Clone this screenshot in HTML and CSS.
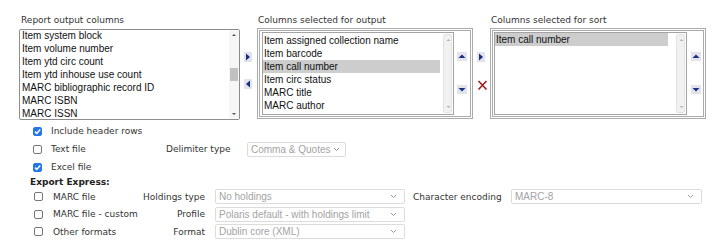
FILE: index.html
```html
<!DOCTYPE html>
<html>
<head>
<meta charset="utf-8">
<link rel="stylesheet" href="styles.css">
</head>
<body>
<div class="top">
  <div class="col col1">
    <div class="lbl">Report output columns</div>
    <div class="list list1">
      <div class="items">
        <div class="item">Item system block</div>
        <div class="item">Item volume number</div>
        <div class="item">Item ytd circ count</div>
        <div class="item">Item ytd inhouse use count</div>
        <div class="item">MARC bibliographic record ID</div>
        <div class="item">MARC ISBN</div>
        <div class="item">MARC ISSN</div>
      </div>
      <div class="sb sb-active">
        <svg class="sb-up" width="10" height="8" viewBox="0 0 10 8"><path d="M3 5 L5 3 L7 5 Z" fill="#505050"/></svg>
        <div class="sb-track"><div class="thumb"></div></div>
        <svg class="sb-dn" width="10" height="8" viewBox="0 0 10 8"><path d="M3 3 L5 5 L7 3 Z" fill="#505050"/></svg>
      </div>
    </div>
  </div>

  <div class="movers m1">
    <span class="abtn"><svg width="8" height="10" viewBox="0 0 8 10"><path d="M2 1.5 L6 5 L2 8.5 Z" fill="#1b2f80"/></svg></span>
    <span class="abtn"><svg width="8" height="10" viewBox="0 0 8 10"><path d="M6 1.5 L2 5 L6 8.5 Z" fill="#1b2f80"/></svg></span>
  </div>

  <div class="col col2">
    <div class="lbl">Columns selected for output</div>
    <div class="frame frame2">
      <div class="list list2">
        <div class="items">
          <div class="item">Item assigned collection name</div>
          <div class="item">Item barcode</div>
          <div class="item sel">Item call number</div>
          <div class="item">Item circ status</div>
          <div class="item">MARC title</div>
          <div class="item">MARC author</div>
        </div>
        <div class="sb sb-idle">
          <svg class="sb-up" width="9" height="8" viewBox="0 0 9 8"><path d="M2.5 5 L4.5 3 L6.5 5 Z" fill="#b5b5b5"/></svg>
          <div class="sb-track"></div>
          <svg class="sb-dn" width="9" height="8" viewBox="0 0 9 8"><path d="M2.5 3 L4.5 5 L6.5 3 Z" fill="#b5b5b5"/></svg>
        </div>
      </div>
      <div class="updown">
        <span class="ubtn"><svg width="10" height="9" viewBox="0 0 10 9"><path d="M1.5 6 L5 2.5 L8.5 6 Z" fill="#1b2f80"/></svg></span>
        <span class="ubtn"><svg width="10" height="9" viewBox="0 0 10 9"><path d="M1.5 3 L5 6.5 L8.5 3 Z" fill="#1b2f80"/></svg></span>
      </div>
    </div>
  </div>

  <div class="movers m2">
    <span class="abtn"><svg width="8" height="10" viewBox="0 0 8 10"><path d="M2 1.5 L6 5 L2 8.5 Z" fill="#1b2f80"/></svg></span>
    <span class="xbtn"><svg width="11" height="12" viewBox="0 0 11 12"><path d="M1.5 2 L9.5 10.5 M9.5 2 L1.5 10.5" stroke="#a51c1c" stroke-width="1.6"/></svg></span>
  </div>

  <div class="col col3">
    <div class="lbl">Columns selected for sort</div>
    <div class="frame frame3">
      <div class="list list3">
        <div class="items">
          <div class="item sel">Item call number</div>
        </div>
        <div class="sb sb-idle">
          <svg class="sb-up" width="9" height="8" viewBox="0 0 9 8"><path d="M2.5 5 L4.5 3 L6.5 5 Z" fill="#b5b5b5"/></svg>
          <div class="sb-track"></div>
          <svg class="sb-dn" width="9" height="8" viewBox="0 0 9 8"><path d="M2.5 3 L4.5 5 L6.5 3 Z" fill="#b5b5b5"/></svg>
        </div>
      </div>
      <div class="updown">
        <span class="ubtn"><svg width="10" height="9" viewBox="0 0 10 9"><path d="M1.5 6 L5 2.5 L8.5 6 Z" fill="#1b2f80"/></svg></span>
        <span class="ubtn"><svg width="10" height="9" viewBox="0 0 10 9"><path d="M1.5 3 L5 6.5 L8.5 3 Z" fill="#1b2f80"/></svg></span>
      </div>
    </div>
  </div>
</div>

<div class="opts">
  <div class="orow">
    <span class="cb on"><svg width="9" height="9" viewBox="0 0 9 9"><path d="M2 4.6 L3.8 6.4 L7.2 2.6" stroke="#fff" stroke-width="1.5" fill="none"/></svg></span>
    <span class="otext">Include header rows</span>
  </div>
  <div class="orow">
    <span class="cb"></span>
    <span class="otext w1">Text file</span>
    <span class="olabel dl">Delimiter type</span>
    <span class="dsel s-delim">Comma &amp; Quotes<svg class="chev" width="7" height="5" viewBox="0 0 7 5"><path d="M1 1 L3.5 3.5 L6 1" stroke="#888" stroke-width="1" fill="none"/></svg></span>
  </div>
  <div class="orow">
    <span class="cb on"><svg width="9" height="9" viewBox="0 0 9 9"><path d="M2 4.6 L3.8 6.4 L7.2 2.6" stroke="#fff" stroke-width="1.5" fill="none"/></svg></span>
    <span class="otext">Excel file</span>
  </div>
  <div class="ehead">Export Express:</div>
  <div class="erow">
    <span class="cb"></span>
    <span class="etext">MARC file</span>
    <span class="elabel">Holdings type</span>
    <span class="dsel s-wide">No holdings<svg class="chev push" width="7" height="5" viewBox="0 0 7 5"><path d="M1 1 L3.5 3.5 L6 1" stroke="#999" stroke-width="1" fill="none"/></svg></span>
    <span class="olabel enc">Character encoding</span>
    <span class="dsel s-enc">MARC-8<svg class="chev push" width="7" height="5" viewBox="0 0 7 5"><path d="M1 1 L3.5 3.5 L6 1" stroke="#999" stroke-width="1" fill="none"/></svg></span>
  </div>
  <div class="erow">
    <span class="cb"></span>
    <span class="etext">MARC file - custom</span>
    <span class="elabel">Profile</span>
    <span class="dsel s-wide">Polaris default - with holdings limit<svg class="chev push" width="7" height="5" viewBox="0 0 7 5"><path d="M1 1 L3.5 3.5 L6 1" stroke="#999" stroke-width="1" fill="none"/></svg></span>
  </div>
  <div class="erow">
    <span class="cb"></span>
    <span class="etext">Other formats</span>
    <span class="elabel">Format</span>
    <span class="dsel s-wide">Dublin core (XML)<svg class="chev push" width="7" height="5" viewBox="0 0 7 5"><path d="M1 1 L3.5 3.5 L6 1" stroke="#999" stroke-width="1" fill="none"/></svg></span>
  </div>
</div>
</body>
</html>
```

FILE: styles.css
```css
html, body {
  margin: 0;
  padding: 0;
  background: #ffffff;
}
body {
  width: 720px;
  height: 240px;
  overflow: hidden;
  font-family: "DejaVu Sans", Verdana, sans-serif;
  font-size: 9px;
  color: #333333;
}

/* ---------- top area ---------- */
.top {
  display: flex;
  align-items: flex-start;
  padding: 13px 0 0 19px;
  height: 107px;
}
.col { display: flex; flex-direction: column; }
.col1 { width: 221px; }
.col2, .col3 { width: 216px; }
.lbl {
  height: 15px;
  line-height: 14px;
  white-space: nowrap;
  color: #333;
}
.col1 .lbl { padding-left: 2px; }
.col2 .lbl, .col3 .lbl { padding-left: 1px; }

.list {
  display: flex;
  box-sizing: border-box;
  background: #fff;
  overflow: hidden;
  font-family: "Liberation Sans", Arial, sans-serif;
  font-size: 10px;
  color: #111;
}
.items {
  flex: 1;
  overflow: hidden;
  min-width: 0;
}
.item {
  height: 13px;
  line-height: 13px;
  white-space: nowrap;
  padding-left: 1px;
}
.item.sel { background: #cdcdcd; }

.list1 {
  margin-top: 1px;
  height: 91px;
  border: 1px solid #8d8d8d;
  border-radius: 2px;
}
.list1 .items { padding: 0 0 0 1px; margin-top: -1px; }

.sb {
  display: flex;
  flex-direction: column;
  box-sizing: border-box;
}
.sb svg { display: block; flex: none; }
.sb-track { flex: 1; position: relative; }
.sb-active {
  width: 10px;
  background: #f6f6f6;
  margin-right: 0;
  padding-top: 1px;
  padding-bottom: 1px;
}
.sb-active .sb-track { display: flex; flex-direction: column; padding-top: 29px; }
.thumb {
  width: 8px;
  height: 13px;
  margin-left: 1px;
  background: #c1c1c1;
}
.sb-idle {
  width: 9px;
  margin: 1px 1px 1px 0;
  background: #f1f1f1;
  border: 1px solid #e2e2e2;
  border-radius: 2px;
  padding-top: 1px;
  padding-bottom: 1px;
}

/* frames */
.frame {
  display: flex;
  align-items: flex-start;
  height: 91px;
  box-sizing: border-box;
  border: 3px double #ababab;
  padding-top: 1px;
}
.frame2 { padding-left: 2px; }
.frame3 { padding-left: 1px; }
.list2, .list3 {
  height: 83px;
  border: 1px solid #a3a3a3;
}
.list2 { width: 192px; }
.list3 { width: 193px; }
.list2 .items { padding: 1px 3px 0 0; }
.list3 .items { padding: 0 8px 0 0; }
.list2 .item { padding-left: 1px; }

.updown {
  display: flex;
  flex-direction: column;
  padding-top: 20px;
  gap: 24px;
}
.frame2 .updown { margin-left: 3px; }
.frame3 .updown { margin-left: 4px; }
.ubtn {
  display: block;
  width: 10px;
  height: 9px;
  background: #e3e3ec;
}
.ubtn svg, .abtn svg, .xbtn svg { display: block; }

.movers {
  display: flex;
  flex-direction: column;
  padding-top: 39px;
}
.m1 { margin-left: 4px; margin-right: 5px; width: 8px; gap: 17px; }
.m2 { margin-left: 4px; margin-right: 3px; width: 10px; gap: 17px; }
.abtn {
  display: block;
  width: 8px;
  height: 10px;
  background: #e3e3ec;
}
.xbtn { display: block; width: 11px; height: 12px; }

/* ---------- options ---------- */
.opts {
  padding-top: 2px;
}
.orow {
  display: flex;
  align-items: center;
  height: 18px;
  padding-left: 33px;
}
.cb {
  flex: none;
  display: block;
  width: 9px;
  height: 9px;
  box-sizing: border-box;
  border: 1px solid #777;
  border-radius: 2px;
  background: #fff;
}
.cb svg { display: block; margin: -1px; }
.cb.on {
  border-color: #2477e6;
  background: #2477e6;
}
.otext { margin-left: 9px; white-space: nowrap; }
.w1 { width: 115px; }
.olabel { white-space: nowrap; }
.dl { width: 81px; }

.dsel {
  display: flex;
  align-items: center;
  box-sizing: border-box;
  height: 15px;
  border: 1px solid #dcdcdc;
  border-radius: 2px;
  padding-left: 3px;
  font-family: "Liberation Sans", Arial, sans-serif;
  font-size: 10px;
  color: #a3a3a3;
  white-space: nowrap;
  overflow: hidden;
}
.chev { flex: none; margin-left: 3px; }
.chev.push { margin-left: auto; margin-right: 7px; }
.s-delim { width: 99px; }
.s-wide { width: 190px; }
.s-enc { width: 191px; }

.ehead {
  font-weight: bold;
  height: 12px;
  line-height: 12px;
  padding-left: 30px;
  color: #222;
}
.erow {
  display: flex;
  align-items: center;
  height: 17.5px;
  padding-left: 34px;
}
.etext { margin-left: 10px; width: 80px; white-space: nowrap; }
.elabel { width: 72px; text-align: right; white-space: nowrap; margin-right: 10px; }
.enc { margin-left: 8px; width: 98px; }
```
